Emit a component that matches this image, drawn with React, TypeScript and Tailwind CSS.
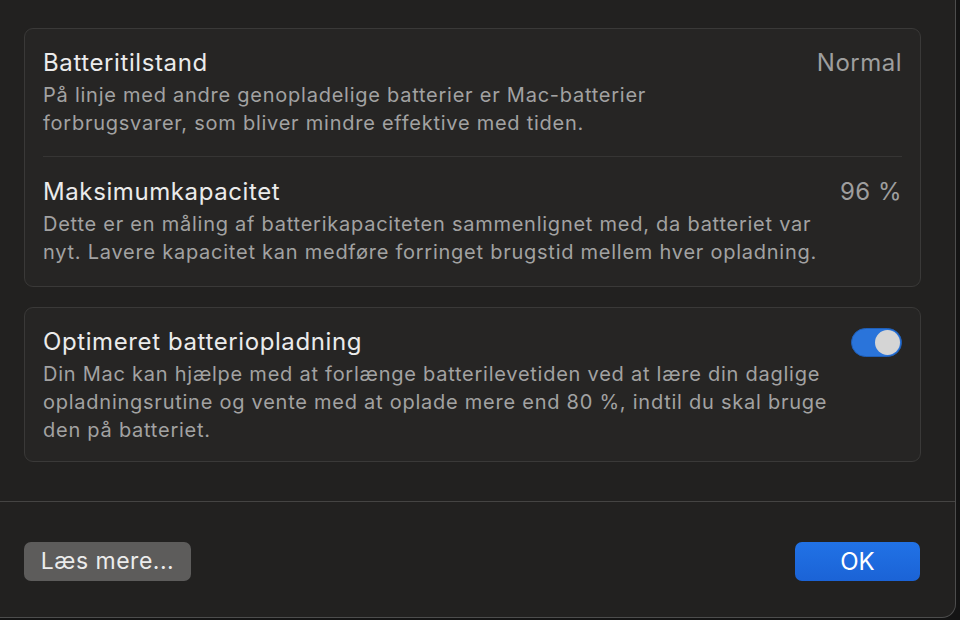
const font = { fontFamily: "Inter, 'Noto Sans', sans-serif" };

function Row({ title, value, children }: { title: string; value?: React.ReactNode; children: React.ReactNode }) {
  return (
    <div className="flex items-start justify-between gap-4">
      <div className="flex min-w-0 flex-col">
        <p className="text-[24px] leading-[30px] tracking-[0.6px] whitespace-nowrap text-[#ebebeb]">{title}</p>
        <p className="mt-[3px] text-[20px] leading-[28px] tracking-[0.75px] whitespace-nowrap text-[#a2a2a2]">{children}</p>
      </div>
      {value}
    </div>
  );
}

function Value({ children }: { children: React.ReactNode }) {
  return <p className="shrink-0 text-[24px] leading-[30px] tracking-[0.5px] whitespace-nowrap text-[#9e9e9e]">{children}</p>;
}

function Toggle() {
  return (
    <div className="mt-[1px] flex h-[29px] w-[51px] shrink-0 items-center justify-end rounded-full border border-[#1f5fb8] bg-[#2a74da] px-[1px]">
      <div className="h-[25px] w-[25px] rounded-full bg-[#d5d5d5]" />
    </div>
  );
}

export default function App() {
  return (
    <div className="h-[620px] w-[960px] overflow-hidden bg-[#141414]" style={font}>
      <div className="flex h-[618px] w-[956px] flex-col rounded-br-[14px] border-r border-b border-[#4d4d4d] bg-[#222120]">
        <div className="flex flex-col gap-[20px] pl-[24px] pt-[28px]">
          <div className="w-[897px] rounded-[9px] border border-[#3a3938] bg-[#262524] px-[18px]">
            <div className="pt-[19px] pb-[19px]">
              <Row title="Batteritilstand" value={<Value>Normal</Value>}>
                På linje med andre genopladelige batterier er Mac-batterier
                <br />
                forbrugsvarer, som bliver mindre effektive med tiden.
              </Row>
            </div>
            <div className="h-px bg-[#363534]" />
            <div className="pt-[20px] pb-[20px]">
              <Row title="Maksimumkapacitet" value={<Value>96 %</Value>}>
                Dette er en måling af batterikapaciteten sammenlignet med, da batteriet var
                <br />
                nyt. Lavere kapacitet kan medføre forringet brugstid mellem hver opladning.
              </Row>
            </div>
          </div>

          <div className="w-[897px] rounded-[9px] border border-[#3a3938] bg-[#262524] px-[18px] pt-[19px] pb-[17px]">
            <Row title="Optimeret batteriopladning" value={<Toggle />}>
              Din Mac kan hjælpe med at forlænge batterilevetiden ved at lære din daglige
              <br />
              opladningsrutine og vente med at oplade mere end 80 %, indtil du skal bruge
              <br />
              den på batteriet.
            </Row>
          </div>
        </div>

        <div className="mt-[39px] h-px bg-[#454443]" />

        <div className="flex items-center justify-between pl-[24px] pr-[35px] pt-[40px]">
          <button className="flex h-[39px] w-[167px] items-center justify-center rounded-[7px] bg-[#5d5c5b] text-[23px] tracking-[0.5px] whitespace-nowrap text-[#ececec]">
            Læs mere...
          </button>
          <button className="flex h-[39px] w-[125px] items-center justify-center rounded-[7px] bg-gradient-to-b from-[#2172e6] to-[#1b63d6] text-[24px] text-white">
            OK
          </button>
        </div>
      </div>
    </div>
  );
}
